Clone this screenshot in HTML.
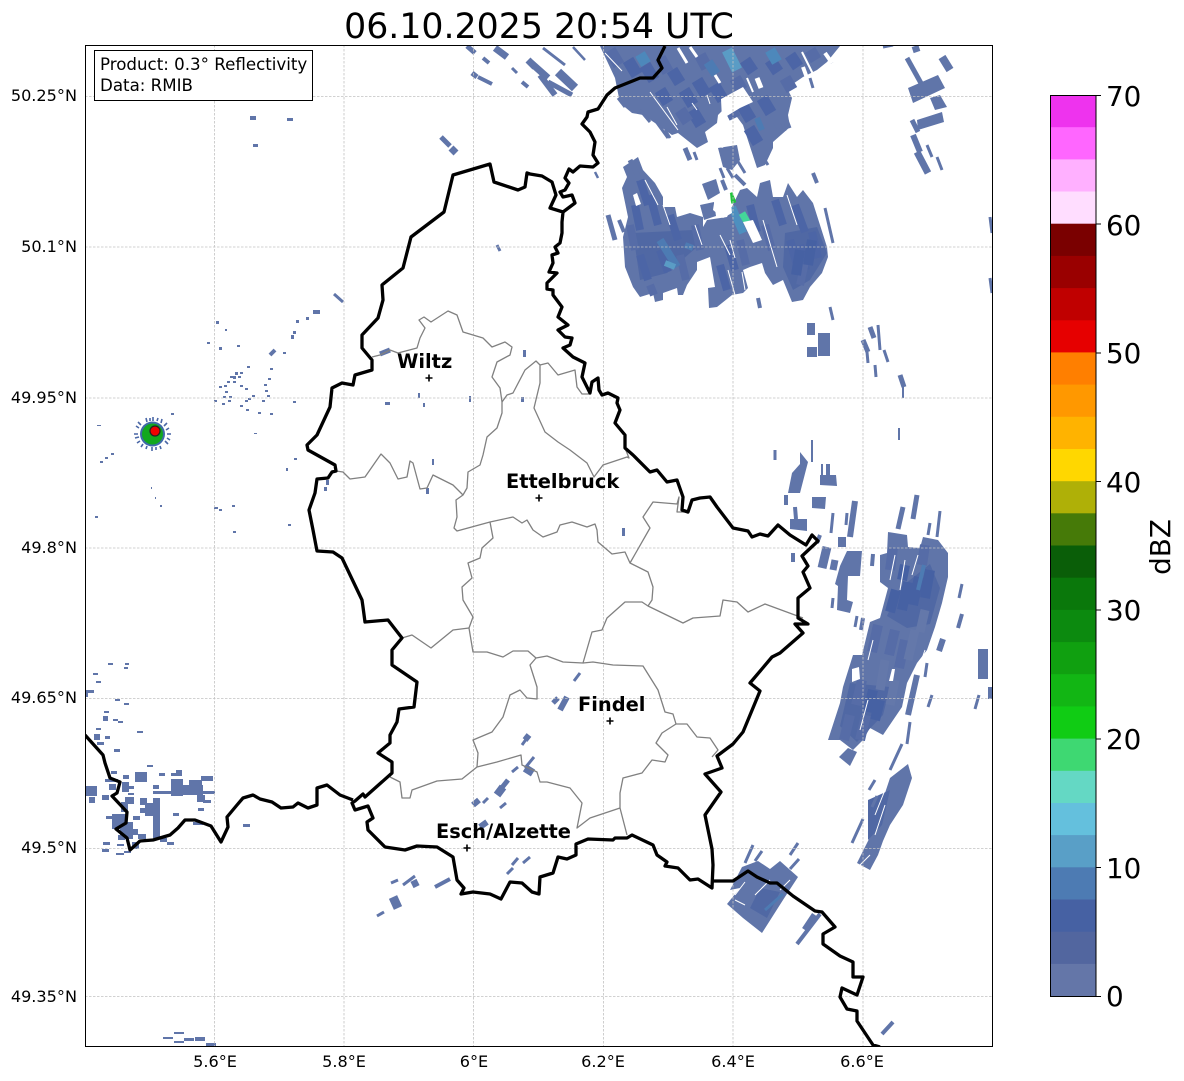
<!DOCTYPE html>
<html><head><meta charset="utf-8"><title>Radar</title>
<style>html,body{margin:0;padding:0;background:#fff}svg{display:block}text{font-family:"DejaVu Sans","Liberation Sans",sans-serif;fill:#000}</style>
</head><body>
<svg xmlns="http://www.w3.org/2000/svg" width="1184" height="1081" viewBox="0 0 1184 1081">
<rect width="1184" height="1081" fill="#fff"/>
<defs><clipPath id="ax"><rect x="85" y="45" width="907.5" height="1001"/></clipPath></defs>
<g clip-path="url(#ax)">
<!-- radar polygons -->
<g fill="#6075a9">
<path d="M600,46 L840,46 827,62 817,70 803,77 787,88 792,98 788,115 790,127 773,142 773,148 765,165 757,168 743,125 737,117 725,108 718,115 717,123 705,132 708,142 697,148 678,133 672,135 655,123 643,115 632,113 620,103 615,78Z"/>
<path d="M718,148 737,145 740,160 732,170 723,167Z"/>
<path d="M623,167 638,157 643,170 655,183 663,197 663,207 675,207 677,217 690,213 703,217 703,227 707,220 727,217 740,190 747,188 757,197 760,183 770,180 773,197 783,197 788,183 797,197 803,190 813,203 827,247 828,257 822,273 810,287 803,300 792,302 783,280 773,285 765,273 762,263 750,267 743,270 748,288 743,293 732,295 717,307 709,308 708,288 715,287 710,257 697,262 697,270 687,285 683,295 678,295 677,288 663,293 663,300 655,302 653,293 640,297 633,287 625,267 623,237 628,217 622,188 627,177Z"/>
<path d="M702,184 716,179 720,193 708,200Z"/><path d="M700,205 714,202 716,216 704,220Z"/>
<path d="M908,88 938,75 945,88 913,103Z"/><path d="M930,98 940,95 947,107 935,110Z"/><path d="M917,120 942,112 944,122 918,130Z"/>
<path d="M800,452 808,462 800,493 788,493 792,473 800,464Z"/><path d="M820,475 836,475 837,486 820,485Z"/><path d="M812,497 826,497 825,509 812,508Z"/><path d="M790,519 807,519 807,531 790,529Z"/>
<path d="M847,551 862,551 860,576 848,576 847,600 853,602 850,613 837,610 838,586 835,584 840,566Z"/>
<path d="M888,532 907,535 908,547 920,548 923,537 938,540 948,553 948,577 942,603 935,627 927,650 917,663 907,683 902,707 883,735 870,728 863,740 853,750 840,740 828,740 840,703 843,687 853,655 862,655 870,622 880,618 888,588 880,582 880,555 887,553Z"/>
<path d="M839,757 848,748 857,752 850,766Z"/>
<path d="M908,764 912,778 903,805 890,825 883,841 878,855 870,870 857,863 870,837 877,817 890,778Z"/>
<path d="M742,867 758,861 770,869 780,861 798,877 783,900 762,933 743,918 727,904 740,888 730,890Z"/>
<rect x="807" y="347" width="10" height="10"/><rect x="807" y="323" width="8" height="12"/><rect x="818" y="333" width="12" height="23"/>
</g>
<!-- darker bands -->
<g fill="#5068a4">
<path d="M785,233 817,227 827,253 810,280 793,290 783,267Z"/>
<path d="M633,233 693,230 697,247 667,273 640,280Z"/>
<path d="M900,588 930,564 940,588 930,624 907,628 887,616Z"/>
<path d="M850,683 890,687 883,715 857,742 840,726Z"/>
<path d="M760,888 780,892 767,918 750,908Z"/>
<path d="M868,800 890,790 882,825 868,840Z"/>
</g>
<!-- tile texture -->
<g fill="none" stroke-linecap="butt">
<g stroke="#4c65a6" stroke-width="12">
<path d="M628,60L637,75M645,65L654,80M697,80L706,95M684,90L693,105M692,110L701,125M714,85L723,100M762,98L771,113M749,128L758,143M742,105L751,120M770,60L778,72M745,60L753,72M660,90L668,103M672,70L680,83M790,55L798,67"/>
</g>
<g stroke="#566ca7" stroke-width="12">
<path d="M610,50L619,65M660,58L668,72M680,110L688,122M730,108L735,118M785,78L792,90M810,50L816,60M735,78L742,90M700,55L707,68"/>
</g>
<g stroke="#4c65a6" stroke-width="8">
<path d="M640,180L648,205M650,195L658,225M635,205L640,230M670,215L678,240M640,255L648,280M660,250L668,272M795,205L805,232M790,240L797,265M775,200L783,225M750,205L757,232M728,245L735,270M720,265L727,290M800,245L806,270M812,232L818,258"/>
</g>
<g stroke="#566ca7" stroke-width="8">
<path d="M630,225L635,250M695,225L700,250M740,240L746,265M765,225L772,250M680,255L686,280M650,285L654,295M805,262L800,285"/>
</g>
<g stroke="#4661a3" stroke-width="10">
<path d="M896,590L890,612M908,582L902,610M919,577L913,605M930,570L925,598M873,690L868,712M880,700L875,720"/>
<path d="M800,250L796,275M812,240L808,265M905,565L902,580"/>
</g>
<g stroke="#566ca7" stroke-width="10">
<path d="M878,625L872,652M895,630L889,655M905,640L899,668M862,680L856,705M850,715L844,740M866,715L860,740M925,545L922,565M893,548L890,570"/>
</g>
<g stroke="#6478aa" stroke-width="9">
<path d="M885,660L880,690M915,630L908,660M895,680L890,705M925,610L920,632"/>
</g>
</g>
<!-- streaks -->
<g fill="none" stroke="#6075a9" stroke-linecap="butt">
<path stroke-width="5" d="M467,46L475,53M472,73L477,77M441,137L450,146"/>
<path stroke-width="7" d="M495,48L507,57M528,60L535,67M530,62L548,78M451,148L456,153"/>
<path stroke-width="4" d="M483,58L489,63M478,77L492,84M522,82L528,87"/>
<path stroke-width="3" d="M512,68L517,73M543,48L565,65M497,245L500,251M334,294L343,302"/>
<path stroke-width="2.5" d="M573,47L585,60M595,172L598,178"/>
<path stroke-width="6" d="M540,75L555,95"/><path stroke-width="9" d="M558,72L575,88"/><path stroke-width="5" d="M548,82L572,95"/>
<path stroke-width="3" d="M618,98L625,107M640,110L650,122M655,120L668,138M665,130L670,138M694,152L697,160M810,78L813,88M775,123L780,133M782,122L785,131M787,120L790,128M763,157L768,165M823,50L832,63M737,160L745,173M727,168L733,178M720,168L724,178M706,150L706,150"/>
<path stroke-width="7" d="M915,46L917,52"/><path stroke-width="3" d="M883,47L893,45"/><path stroke-width="5" d="M907,58L922,85"/><path stroke-width="8" d="M942,57L950,70"/>
<path stroke-width="5" d="M912,120L918,132"/><path stroke-width="6" d="M913,135L920,152"/><path stroke-width="7" d="M917,152L928,173"/><path stroke-width="3" d="M927,145L932,157M937,157L942,170M990,217L992,233M990,278L992,293"/>
<path stroke-width="5" d="M608,215L615,240"/><path stroke-width="4" d="M619,220L624,232M813,173L817,183"/><path stroke-width="3" d="M825,208L833,243M830,307L833,320"/><path stroke-width="4" d="M758,298L760,308"/>
<path stroke-width="5" d="M630,160L640,180M685,148L690,160"/>
<path stroke-width="4" d="M735,175L745,185M722,180L726,190"/>
<path stroke-width="5" d="M870,327L874,338M863,340L868,352M900,375L904,387"/><path stroke-width="3" d="M878,325L880,350M867,352L868,363M875,365L876,377M884,350L888,362"/><path stroke-width="2" d="M903,387L903,398M899,428L899,440"/>
<path stroke-width="3" d="M775,450L775,460"/><path stroke-width="2" d="M812,440L812,462M822,464L822,475"/><path stroke-width="4" d="M786,495L786,505M828,464L828,475M795,507L796,519"/>
<path stroke-width="6" d="M855,501L850,537"/><path stroke-width="3" d="M833,513L831,533M847,513L846,525M833,598L832,608M857,616L855,627"/>
<path stroke-width="8" d="M842,537L842,547"/><path stroke-width="4" d="M820,535L817,543M861,630L863,618M873,554L872,566M793,553L793,562"/><path stroke-width="9" d="M827,547L822,568"/><path stroke-width="7" d="M835,560L833,570"/>
<path stroke-width="5" d="M917,495L913,519M903,507L898,529"/><path stroke-width="3" d="M940,511L937,537M930,523L928,535M962,584L959,598M927,663L925,677M932,695L928,707M910,722L907,744M902,744L890,770M875,780L869,790M877,796L872,807M863,819L852,843M979,695L975,709M753,845L745,863M798,843L790,855M762,851L755,861M799,859L790,869"/>
<path stroke-width="4" d="M962,614L958,628M820,914L797,944M893,1022L882,1034"/><path stroke-width="6" d="M943,639L939,651M917,675L908,715"/>
<path stroke-width="10" d="M983,649L983,679"/><path stroke-width="4" d="M990,687L990,699"/><path stroke-width="7" d="M815,915L805,930"/>
<path stroke-width="3" d="M580,673L574,681M522,745L527,738M534,757L525,768M518,767L512,772M506,803L500,808M488,798L483,803M518,858L512,865M530,857L523,863M513,868L507,874M398,880L391,883M415,876L403,885M384,912L377,916"/>
<path stroke-width="5" d="M553,703L558,698M380,354L390,350"/><path stroke-width="6" d="M560,710L567,697M529,735L525,740M479,800L473,805M487,822L480,827"/>
<path stroke-width="8" d="M525,768L533,773M503,787L497,795"/><path stroke-width="5" d="M508,780L500,790"/><path stroke-width="7" d="M418,882L412,885"/><path stroke-width="4" d="M450,879L435,887"/><path stroke-width="9" d="M393,897L398,908"/>
</g>
<!-- SW rect cells + speckles -->
<g fill="#6075a9">
<path d="M108 663h5v2h-5zM125 663h4v2h-4zM124 667h4v2h-4zM93 673h5v2h-5zM96 681h5v2h-5zM85 690h9v3h-9zM85 693h3v4h-3zM115 699h5v2h-5zM124 703h5v2h-5zM104 711h5v2h-5zM103 716h5v5h-5zM113 719h5v2h-5zM118 721h5v2h-5zM96 728h5v2h-5zM137 731h6v2h-6zM94 734h6v6h-6zM105 736h5v3h-5zM97 742h7v3h-7zM114 749h6v3h-6zM147 765h6v2h-6zM111 771h6v3h-6zM135 772h12v10h-12zM123 775h6v4h-6zM159 773h6v3h-6zM171 773h10v3h-10zM176 770h6v6h-6zM85 786h12v10h-12zM89 797h6v6h-6zM105 779h13v3h-13zM122 782h7v10h-7zM109 784h7v6h-7zM127 786h7v3h-7zM153 785h6v4h-6zM171 779h12v17h-12zM183 785h20v10h-20zM189 780h13v9h-13zM201 776h12v5h-12zM153 791h20v3h-20zM202 791h13v3h-13zM197 795h8v7h-8zM203 800h8v3h-8zM198 808h6v3h-6zM125 797h9v7h-9zM121 802h7v10h-7zM102 795h7v5h-7zM128 793h6v2h-6zM140 798h7v7h-7zM145 803h15v13h-15zM140 808h7v5h-7zM153 798h7v40h-7zM173 813h6v3h-6zM133 816h7v4h-7zM112 814h15v15h-15zM106 816h7v3h-7zM120 822h13v17h-13zM128 829h10v6h-10zM138 834h8v5h-8zM160 838h7v4h-7zM167 842h7v3h-7zM132 842h7v7h-7zM118 835h7v5h-7zM103 842h7v3h-7zM117 844h7v2h-7zM102 849h7v3h-7zM116 853h8v2h-8zM124 851h7v2h-7zM243 824h7v3h-7zM193 822h10v3h-10z"/>
<path d="M174 1032h10v2h-10zM163 1037h10v2h-10zM174 1041h10v2h-10zM184 1038h10v3h-10zM195 1037h10v4h-10zM206 1043h10v3h-10z"/>
<path d="M250 116h6v4h-6zM287 118h6v3h-6zM253 144h5v3h-5zM313 310h7v4h-7zM306 317h3v3h-3zM296 320h3v3h-3zM291 335h3v4h-3zM293 331h3v3h-3zM283 352h3v2h-3zM216 321h3v3h-3zM225 329h2v2h-2zM207 342h3v2h-3zM219 347h3v3h-3zM237 345h3v2h-3z"/>
<path d="M247 366h3v2h-3zM235 372h3v3h-3zM240 372h3v2h-3zM233 376h3v3h-3zM230 376h3v2h-3zM238 376h3v2h-3zM227 381h3v2h-3zM233 381h3v2h-3zM224 385h3v2h-3zM219 386h3v2h-3zM225 391h3v2h-3zM240 385h3v2h-3zM245 388h3v2h-3zM252 395h3v2h-3zM265 390h3v2h-3zM268 378h3v2h-3zM264 384h3v2h-3zM267 395h3v2h-3zM223 396h3v2h-3zM229 396h3v2h-3zM214 400h3v2h-3zM228 400h3v2h-3zM245 400h3v2h-3zM262 400h3v2h-3zM248 398h3v2h-3zM270 368h3v2h-3zM293 401h3v2h-3zM246 409h3v2h-3zM222 403h3v2h-3zM240 405h3v2h-3zM258 412h3v2h-3zM270 413h3v2h-3zM254 433h3v1h-3zM97 425h4v1h-4zM171 413h3v2h-3zM111 453h3v2h-3zM105 457h3v2h-3zM100 461h3v2h-3zM151 487h1v2h-1zM155 497h1v2h-1zM160 505h2v2h-2zM95 516h3v2h-3zM214 507h4v2h-4zM219 509h3v2h-3zM232 505h3v2h-3zM233 531h3v2h-3zM288 524h3v2h-3zM286 468h2v3h-2zM294 458h3v2h-3z"/>
<path d="M385 402h5v3h-5zM418 393h2v5h-2zM423 403h2v4h-2zM469 396h2v6h-2zM523 350h3v7h-3zM521 397h3v5h-3zM432 459h2v6h-2zM426 488h3v6h-3zM326 480h3v5h-3zM324 487h3v4h-3zM622 528h3v8h-3z"/>
</g>
<path fill="none" stroke="#6075a9" stroke-width="4" d="M270,355L275,350"/>
<!-- light/colour echoes -->
<g fill="none" stroke-linecap="butt">
<path stroke="#4d7bb3" stroke-width="8" d="M660,240L677,267"/>
<path stroke="#4d88bb" stroke-width="11" d="M640,54L646,64M770,50L777,62"/>
<path stroke="#4d7bb3" stroke-width="10" d="M708,62L716,74"/>
<path stroke="#5a9cc5" stroke-width="11" d="M727,50L737,70"/>
<path stroke="#5a9cc5" stroke-width="6" d="M665,263L675,267"/>
<path stroke="#4d7bb3" stroke-width="6" d="M685,245L693,248M757,118L762,130"/>
<path stroke="#4d7bb3" stroke-width="4" d="M924,565L918,590"/>
<path stroke="#4d8fbf" stroke-width="8" d="M732,207L743,233"/>
<path stroke="#1fc43a" stroke-width="5" d="M730,193L734,203"/>
<path stroke="#44d69a" stroke-width="7" d="M742,213L747,222"/>
<path stroke="#4d7bb3" stroke-width="3" d="M765,910L783,894"/>
</g>
<!-- white gaps -->
<g fill="#fff">
<path d="M721,99 743,87 753,102 740,108 722,119Z"/><path d="M707,135 715,128 732,142 722,148Z"/>
<path d="M743,222 753,220 762,240 753,243Z"/><path d="M715,197 730,193 732,213 723,218 713,210Z"/>
<path d="M852,669l7,-2 1,12 -8,3z"/><path d="M892,669l3,0 -2,12 -4,0z"/>
<path d="M633,195 637,193 641,204 636,206Z"/>
</g>
<g fill="none" stroke="#fff" stroke-width="1">
<path d="M605,53L622,71M650,92L678,130M667,107L677,125M692,103L697,110M707,95L710,104"/>
<path stroke-width="3" d="M678,48L687,63M715,75L720,83M690,47L697,57"/>
<path stroke-width="5" d="M757,78L761,88"/><path stroke-width="2" d="M747,78L753,92M802,52L817,82"/><path stroke-width="4" d="M803,67L807,78M825,53L832,63"/>
<path d="M763,220L777,267M720,235L730,255M730,240L735,258M695,225L702,245M663,205L670,225M645,180L658,205M742,272L745,290M728,270L735,295M787,195L797,225"/>
<path d="M895,555L890,580M918,555L912,575M905,560L900,590M868,700L860,730M873,640L868,660M925,650L918,670"/>
<path d="M745,882L735,895M770,880L755,895M790,880L780,890M745,905L735,900M885,790L875,815M885,805L875,835M870,855L860,865"/>
</g>
<!-- radar site -->
<g stroke="#4a67a6" stroke-width="1.6" fill="none"><path d="M138,434h-4M139,428l-3,-2M141,425l-3,-3M147,422l-1,-4M150,421v-3M153,421v-4M157,421l1,-3M161,423l1,-4M164,426l3,-3M166,430l3,-2M167,434h4M167,438l3,2M165,441l3,3M160,446l1,3M156,447v3M152,447v4M147,446l-1,3M143,444l-2,3M140,441l-3,2M139,437l-4,1"/></g>
<circle cx="152.5" cy="434" r="12.5" fill="#3f6aa8"/>
<circle cx="152.5" cy="434" r="10.5" fill="#12a81e"/>
<circle cx="155" cy="431" r="5" fill="#f00000" stroke="#222" stroke-width="1.2"/>
</g>
<!-- grid -->
<g stroke="#c2c2c2" stroke-width="0.8" stroke-dasharray="2.5 1.5" fill="none">
<path d="M214.5,45V1046M344,45V1046M473.5,45V1046M603.5,45V1046M733,45V1046M863,45V1046"/>
<path d="M85,96.5H992M85,247H992M85,398H992M85,548H992M85,698.5H992M85,848.5H992M85,996.5H992"/>
</g>
<!-- canton boundaries -->
<g fill="none" stroke="#808080" stroke-width="1.3" stroke-linejoin="round">
<path d="M372,357 380,355 390,350 398,353 417,348 420,338 425,328 419,320 424,317 431,322 448,311 457,315 463,332 483,338 492,347 505,342 512,347 510,355 497,362 492,377 500,388 502,402 502,413 497,428 487,437 483,455 480,465 468,472 467,488 463,495 456,500 457,517 454,528 457,531 490,522 513,517 522,523 527,520 533,530 543,537 557,532 560,525 572,522 587,527 595,524 597,530 598,542 612,554 625,552 630,563 648,572 653,587 652,600 648,606"/>
<path d="M630,563 650,528 643,517 653,502 677,504 679,497 677,512 687,512"/>
<path d="M336,471 343,472 350,479 365,477 381,454 390,463 398,479 407,477 410,461 413,463 420,489 427,488 433,475 453,485 463,495"/>
<path d="M502,402 507,395 513,393 525,370 536,361 540,365 540,383 534,408 545,432 558,442 570,450 587,463 594,477 603,465 627,457 629,458 625,448"/>
<path d="M540,365 548,363 558,375 575,370 577,387 582,394 590,394"/>
<path d="M490,522 493,538 482,548 480,558 468,563 472,578 462,587 463,600 473,617 469,628 473,652 487,652 503,657 513,651 528,651 536,658 530,665 537,687 537,699 527,698 520,690 510,695 503,717 492,732 473,740 478,753 477,767"/>
<path d="M469,628 453,630 431,648 412,635 402,638"/>
<path d="M536,658 547,656 563,662 583,663 592,632 602,630 607,618 625,602 642,602 648,606 683,623 693,618 720,616 723,600 737,602 748,612 765,604 803,618"/>
<path d="M583,663 593,662 613,665 643,666 658,690 665,712 673,714 676,724 687,724 697,737 710,738 718,750 712,757"/>
<path d="M676,724 662,733 656,743 668,755 665,762 652,760 642,773 623,778 620,793 620,808 627,835"/>
<path d="M620,808 590,818 577,828 582,803 570,788 547,782 540,782 537,772 522,765 521,755 497,762 477,767 462,779 437,781 412,790 410,798 402,798 400,782 390,777"/>
</g>
<!-- national borders -->
<g fill="none" stroke="#000" stroke-width="3.3" stroke-linejoin="round" clip-path="url(#ax)">
<path d="M490,164 453,175 444,212 411,237 403,268 382,285 383,300 378,318 362,335 362,348 372,360 372,370 355,375 353,385 342,383 332,388 330,407 317,435 307,445 308,450 335,465 336,471 332,472 328,478 317,479 315,493 309,510 313,530 317,551 333,552 342,558 362,600 363,607 365,622 388,620 402,638 392,650 392,665 417,682 414,707 399,709 397,722 390,735 390,743 378,753 392,762 392,773 365,797 363,794 355,801 352,803 355,810 368,806 373,818 367,822 368,830 385,847 405,850 417,846 437,847 453,857 457,880 464,888 461,894 473,892 490,894 501,899 510,882 522,883 532,892 539,894 540,877 553,873 558,857 567,859 576,855 576,844 588,839 613,840 615,838 627,838 632,835 653,845 657,855 667,862 665,866 678,868 690,880 698,879 712,888 713,865 712,849 705,815 721,792 705,774 722,768 717,756 733,744 743,732 760,691 750,683 772,657 780,653 803,633 795,624 808,624 798,618 798,598 810,588 803,572 808,566 802,556 818,541 812,535 806,545 790,535 778,525 768,536 760,534 752,537 748,531 733,528 717,507 710,497 700,498 692,500 688,512 682,510 683,497 677,480 667,482 657,470 650,472 633,455 625,448 625,435 615,423 620,410 617,403 618,398 608,393 602,395 599,390 598,378 592,382 590,393 582,377 585,363 573,357 563,348 570,345 572,338 565,337 558,330 568,325 558,317 562,307 553,295 553,290 547,289 547,283 552,278 557,273 549,272 553,263 552,255 558,253 555,247 560,243 562,233 562,222 563,212 550,208 556,195 552,182 542,176 530,174 527,173 525,187 518,190 494,182Z"/>
<path d="M563,212 575,203 572,195 563,197 560,192 565,190 569,183 565,178 569,169 573,172 580,166 593,167 598,163 593,155 595,142 590,132 582,124 587,117 588,112 598,109 607,95 615,88 640,78 653,78 662,68 658,60 665,46"/>
<path d="M85,735 103,755 105,763 110,778 120,782 117,793 112,796 127,812 126,823 116,829 127,838 130,850 140,841 153,840 170,835 178,828 185,820 195,820 211,826 221,842 228,827 227,817 237,805 243,798 253,795 260,799 272,802 281,808 293,807 298,803 308,808 317,805 317,788 327,785 340,795 353,800"/>
<path d="M713,881 720,881 733,881 748,871 757,877 770,883 777,883 793,896 815,911 822,912 835,927 823,934 823,944 840,956 853,962 853,977 863,977 857,995 842,988 840,997 847,1009 857,1011 857,1021 873,1045 880,1047"/>
</g>
<!-- city markers -->
<g stroke="#000" stroke-width="1.6" fill="none"><path d="M425.5,378h7M429,374.5v7M535.5,498h7M539,494.5v7M606.5,721h7M610,717.5v7M463.5,848h7M467,844.5v7"/></g>
<g font-size="19.4" font-weight="700">
<text x="397" y="368">Wiltz</text>
<text x="506" y="488">Ettelbruck</text>
<text x="578" y="711">Findel</text>
<text x="436" y="838">Esch/Alzette</text>
</g>
<rect x="85.5" y="45.5" width="907" height="1001" fill="none" stroke="#000" stroke-width="1"/>
<!-- info box -->
<rect x="94.5" y="50.5" width="218" height="50" fill="#fff" stroke="#000" stroke-width="1"/>
<text x="100" y="70" font-size="16.67">Product: 0.3° Reflectivity</text>
<text x="100" y="91" font-size="16.67">Data: RMIB</text>
<!-- title -->
<text x="539" y="38" font-size="34.72" text-anchor="middle">06.10.2025 20:54 UTC</text>
<!-- axis labels -->
<g font-size="16.1" text-anchor="end">
<text x="77" y="101">50.25°N</text><text x="77" y="252">50.1°N</text><text x="77" y="403">49.95°N</text><text x="77" y="553">49.8°N</text><text x="77" y="703">49.65°N</text><text x="77" y="853">49.5°N</text><text x="77" y="1002">49.35°N</text>
</g>
<g font-size="16.1" text-anchor="middle">
<text x="215" y="1067">5.6°E</text><text x="344" y="1067">5.8°E</text><text x="474" y="1067">6°E</text><text x="603" y="1067">6.2°E</text><text x="733" y="1067">6.4°E</text><text x="862" y="1067">6.6°E</text>
</g>
<!-- colorbar -->
<g>
<rect x="1050" y="95" width="46" height="33" fill="#ee33ee"/><rect x="1050" y="127.2" width="46" height="33" fill="#ff66ff"/><rect x="1050" y="159.4" width="46" height="33" fill="#ffb0ff"/><rect x="1050" y="191.5" width="46" height="33" fill="#ffddff"/>
<rect x="1050" y="223.7" width="46" height="33" fill="#7a0000"/><rect x="1050" y="255.9" width="46" height="33" fill="#9a0000"/><rect x="1050" y="288.1" width="46" height="33" fill="#c00000"/><rect x="1050" y="320.3" width="46" height="33" fill="#e60000"/>
<rect x="1050" y="352.4" width="46" height="33" fill="#ff7f00"/><rect x="1050" y="384.6" width="46" height="33" fill="#ff9800"/><rect x="1050" y="416.8" width="46" height="33" fill="#ffb300"/><rect x="1050" y="449" width="46" height="33" fill="#ffd700"/>
<rect x="1050" y="481.2" width="46" height="33" fill="#afb007"/><rect x="1050" y="513.3" width="46" height="33" fill="#467a08"/><rect x="1050" y="545.5" width="46" height="33" fill="#0a5e08"/><rect x="1050" y="577.7" width="46" height="33" fill="#0a780b"/>
<rect x="1050" y="609.9" width="46" height="33" fill="#0c8a0f"/><rect x="1050" y="642.1" width="46" height="33" fill="#10a010"/><rect x="1050" y="674.2" width="46" height="33" fill="#12b614"/><rect x="1050" y="706.4" width="46" height="33" fill="#10cc14"/>
<rect x="1050" y="738.6" width="46" height="33" fill="#3ed872"/><rect x="1050" y="770.8" width="46" height="33" fill="#64d8c4"/><rect x="1050" y="803" width="46" height="33" fill="#64c0dd"/><rect x="1050" y="835.1" width="46" height="33" fill="#599fc7"/>
<rect x="1050" y="867.3" width="46" height="33" fill="#4d7bb3"/><rect x="1050" y="899.5" width="46" height="33" fill="#4661a3"/><rect x="1050" y="931.7" width="46" height="33" fill="#52669f"/><rect x="1050" y="963.9" width="46" height="32.1" fill="#6476a8"/>
</g>
<rect x="1050.5" y="95.5" width="45.5" height="901" fill="none" stroke="#000" stroke-width="1"/>
<path stroke="#000" stroke-width="1" fill="none" d="M1096,95.5h5M1096,224h5M1096,353h5M1096,481.5h5M1096,610h5M1096,739h5M1096,867.5h5M1096,996.5h5"/>
<g font-size="27.78">
<text x="1106" y="106">70</text><text x="1106" y="235">60</text><text x="1106" y="363">50</text><text x="1106" y="492">40</text><text x="1106" y="620">30</text><text x="1106" y="749">20</text><text x="1106" y="878">10</text><text x="1106" y="1006">0</text>
</g>
<text transform="translate(1170,547) rotate(-90)" font-size="27.78" text-anchor="middle">dBZ</text>
</svg>
</body></html>
